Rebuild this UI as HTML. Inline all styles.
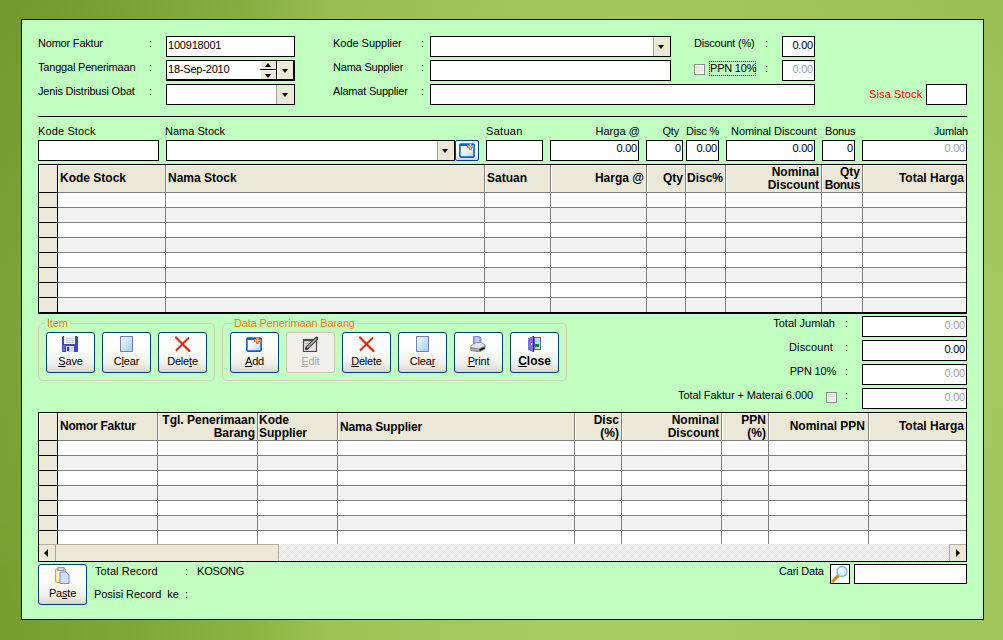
<!DOCTYPE html><html><head><meta charset="utf-8"><style>
*{margin:0;padding:0;box-sizing:border-box}
html,body{width:1003px;height:640px;overflow:hidden}
body{position:relative;font-family:"Liberation Sans", sans-serif;font-size:11px;color:#000;
background:linear-gradient(to bottom,rgba(0,0,0,0.03) 0px,rgba(255,255,255,0.05) 320px,rgba(0,0,0,0.0) 640px),linear-gradient(to right,rgb(117,158,46) 0px,rgb(120,161,50) 60px,rgb(128,169,58) 150px,rgb(138,180,66) 250px,rgb(156,195,84) 330px,rgb(166,202,95) 500px,rgb(168,204,98) 650px,rgb(164,200,92) 850px,rgb(160,197,88) 1003px)}
div{position:absolute}
.panel{left:21px;top:19px;width:963px;height:601px;border:1px solid #000;background:#c0ffc0}
.t{line-height:13px;white-space:pre;letter-spacing:-0.2px}
.tb{background:#fff;border:1px solid #000}
.sbb{background:#ebe8d8;border-top:1px solid #fff;border-left:1px solid #fff;border-right:1px solid #aca899;border-bottom:1px solid #aca899}
.btn{border:1px solid #003c74;border-radius:3px;background:linear-gradient(#ffffff 0%,#fdfdfb 35%,#f2f1ec 75%,#e4e2d8 92%,#d6d0c5 100%)}
.dis{border-color:#c9c7ba;background:#f0efea}
.grp{border:1px solid #d0d0bf;border-radius:5px}
.chk{width:11px;height:11px;border:1px solid #8a8a8a;box-shadow:inset 0 0 0 1px #fafafa;background:linear-gradient(135deg,#d8d8d4,#f6f6f4)}
.hb{line-height:13px;white-space:pre;font-weight:bold;font-size:12px}
</style></head><body>
<div class="panel"></div>
<div class="t" style="left:38px;top:37px;">Nomor Faktur</div>
<div class="t" style="left:149px;top:37px;">:</div>
<div class="t" style="left:38px;top:61px;">Tanggal Penerimaan</div>
<div class="t" style="left:149px;top:61px;">:</div>
<div class="t" style="left:38px;top:85px;">Jenis Distribusi Obat</div>
<div class="t" style="left:149px;top:85px;">:</div>
<div class="t" style="left:333px;top:37px;letter-spacing:-0.03px;">Kode Supplier</div>
<div class="t" style="left:421px;top:37px;">:</div>
<div class="t" style="left:333px;top:61px;">Nama Supplier</div>
<div class="t" style="left:421px;top:61px;">:</div>
<div class="t" style="left:333px;top:85px;">Alamat Supplier</div>
<div class="t" style="left:421px;top:85px;">:</div>
<div class="tb" style="left:166px;top:36px;width:129px;height:21px;"></div>
<div class="t" style="left:168px;top:39px;">100918001</div>
<div class="tb" style="left:166px;top:60px;width:129px;height:21px;"></div>
<div class="t" style="left:168px;top:63px;">18-Sep-2010</div>
<div class="tb" style="left:166px;top:84px;width:129px;height:21px;"></div>
<div class="tb" style="left:430px;top:36px;width:241px;height:21px;"></div>
<div class="tb" style="left:430px;top:60px;width:241px;height:21px;"></div>
<div class="tb" style="left:430px;top:84px;width:385px;height:21px;"></div>
<div class="t" style="left:694px;top:37px;">Discount (%)</div>
<div class="t" style="left:765px;top:37px;">:</div>
<div class="tb" style="left:782px;top:36px;width:33px;height:21px;"></div>
<div class="t" style="right:190px;top:39px;text-align:right;">0.00</div>
<div class="t" style="left:710px;top:62px;">PPN 10%</div>
<div class="t" style="left:765px;top:62px;">:</div>
<div class="tb" style="left:782px;top:60px;width:33px;height:21px;"></div>
<div class="t" style="right:190px;top:63px;text-align:right;color:#a0a0a0;">0.00</div>
<div class="t" style="left:869px;top:88px;color:#ff0000;letter-spacing:0.13px;">Sisa Stock</div>
<div class="tb" style="left:926px;top:84px;width:41px;height:21px;"></div>
<div class="ln" style="left:38px;top:116px;width:929px;height:1px;background:#000"></div>
<div class="t" style="left:38px;top:125px;letter-spacing:0.13px;">Kode Stock</div>
<div class="t" style="left:165px;top:125px;letter-spacing:0.02px;">Nama Stock</div>
<div class="t" style="left:486px;top:125px;letter-spacing:0.3px;">Satuan</div>
<div class="t" style="right:363px;top:125px;text-align:right;letter-spacing:0.05px;">Harga @</div>
<div class="t" style="right:324px;top:125px;text-align:right;">Qty</div>
<div class="t" style="left:686px;top:125px;">Disc %</div>
<div class="t" style="left:731px;top:125px;letter-spacing:-0.05px;">Nominal Discount</div>
<div class="t" style="left:825px;top:125px;">Bonus</div>
<div class="t" style="right:35px;top:125px;text-align:right;">Jumlah</div>
<div class="tb" style="left:38px;top:140px;width:121px;height:21px;"></div>
<div class="tb" style="left:166px;top:140px;width:289px;height:21px;"></div>
<div class="tb" style="left:486px;top:140px;width:57px;height:21px;"></div>
<div class="tb" style="left:550px;top:140px;width:89px;height:21px;"></div>
<div class="tb" style="left:646px;top:140px;width:37px;height:21px;"></div>
<div class="tb" style="left:686px;top:140px;width:33px;height:21px;"></div>
<div class="tb" style="left:726px;top:140px;width:89px;height:21px;"></div>
<div class="tb" style="left:822px;top:140px;width:33px;height:21px;"></div>
<div class="tb" style="left:862px;top:140px;width:105px;height:21px;"></div>
<div class="t" style="right:366px;top:142px;text-align:right;">0.00</div>
<div class="t" style="right:322px;top:142px;text-align:right;">0</div>
<div class="t" style="right:286px;top:142px;text-align:right;">0.00</div>
<div class="t" style="right:190px;top:142px;text-align:right;">0.00</div>
<div class="t" style="right:150px;top:142px;text-align:right;">0</div>
<div class="t" style="right:38px;top:142px;text-align:right;color:#a0a0a0;">0.00</div>
<div style="left:38px;top:164px;width:929px;height:150px;background:#000"></div>
<div style="left:39px;top:165px;width:927px;height:27px;background:#ebe8d8"></div>
<div style="left:58px;top:193px;width:908px;height:14px;background:#ffffff"></div>
<div style="left:39px;top:193px;width:18px;height:14px;background:#ebe8d8"></div>
<div style="left:58px;top:208px;width:908px;height:14px;background:#f2f2f2"></div>
<div style="left:39px;top:208px;width:18px;height:14px;background:#ebe8d8"></div>
<div style="left:58px;top:223px;width:908px;height:14px;background:#ffffff"></div>
<div style="left:39px;top:223px;width:18px;height:14px;background:#ebe8d8"></div>
<div style="left:58px;top:238px;width:908px;height:14px;background:#f2f2f2"></div>
<div style="left:39px;top:238px;width:18px;height:14px;background:#ebe8d8"></div>
<div style="left:58px;top:253px;width:908px;height:14px;background:#ffffff"></div>
<div style="left:39px;top:253px;width:18px;height:14px;background:#ebe8d8"></div>
<div style="left:58px;top:268px;width:908px;height:14px;background:#f2f2f2"></div>
<div style="left:39px;top:268px;width:18px;height:14px;background:#ebe8d8"></div>
<div style="left:58px;top:283px;width:908px;height:14px;background:#ffffff"></div>
<div style="left:39px;top:283px;width:18px;height:14px;background:#ebe8d8"></div>
<div style="left:58px;top:298px;width:908px;height:14px;background:#f2f2f2"></div>
<div style="left:39px;top:298px;width:18px;height:14px;background:#ebe8d8"></div>
<div style="left:58px;top:192px;width:908px;height:1px;background:#808080"></div>
<div style="left:58px;top:207px;width:908px;height:1px;background:#808080"></div>
<div style="left:58px;top:222px;width:908px;height:1px;background:#808080"></div>
<div style="left:58px;top:237px;width:908px;height:1px;background:#808080"></div>
<div style="left:58px;top:252px;width:908px;height:1px;background:#808080"></div>
<div style="left:58px;top:267px;width:908px;height:1px;background:#808080"></div>
<div style="left:58px;top:282px;width:908px;height:1px;background:#808080"></div>
<div style="left:58px;top:297px;width:908px;height:1px;background:#808080"></div>
<div style="left:39px;top:165px;width:927px;height:1px;background:#f6f4ea"></div>
<div style="left:39px;top:165px;width:1px;height:27px;background:#fff"></div>
<div style="left:58px;top:165px;width:1px;height:27px;background:#fff"></div>
<div style="left:57px;top:165px;width:1px;height:147px;background:#000"></div>
<div style="left:39px;top:192px;width:18px;height:1px;background:#000"></div>
<div style="left:39px;top:207px;width:18px;height:1px;background:#000"></div>
<div style="left:39px;top:222px;width:18px;height:1px;background:#000"></div>
<div style="left:39px;top:237px;width:18px;height:1px;background:#000"></div>
<div style="left:39px;top:252px;width:18px;height:1px;background:#000"></div>
<div style="left:39px;top:267px;width:18px;height:1px;background:#000"></div>
<div style="left:39px;top:282px;width:18px;height:1px;background:#000"></div>
<div style="left:39px;top:297px;width:18px;height:1px;background:#000"></div>
<div style="left:165px;top:165px;width:1px;height:147px;background:#808080"></div>
<div style="left:166px;top:165px;width:1px;height:27px;background:#fff"></div>
<div style="left:484px;top:165px;width:1px;height:147px;background:#808080"></div>
<div style="left:485px;top:165px;width:1px;height:27px;background:#fff"></div>
<div style="left:550px;top:165px;width:1px;height:147px;background:#808080"></div>
<div style="left:551px;top:165px;width:1px;height:27px;background:#fff"></div>
<div style="left:646px;top:165px;width:1px;height:147px;background:#808080"></div>
<div style="left:647px;top:165px;width:1px;height:27px;background:#fff"></div>
<div style="left:685px;top:165px;width:1px;height:147px;background:#808080"></div>
<div style="left:686px;top:165px;width:1px;height:27px;background:#fff"></div>
<div style="left:725px;top:165px;width:1px;height:147px;background:#808080"></div>
<div style="left:726px;top:165px;width:1px;height:27px;background:#fff"></div>
<div style="left:821px;top:165px;width:1px;height:147px;background:#808080"></div>
<div style="left:822px;top:165px;width:1px;height:27px;background:#fff"></div>
<div style="left:862px;top:165px;width:1px;height:147px;background:#808080"></div>
<div style="left:863px;top:165px;width:1px;height:27px;background:#fff"></div>
<div class="hb" style="left:60px;top:172px;">Kode Stock</div>
<div class="hb" style="left:168px;top:172px;">Nama Stock</div>
<div class="hb" style="left:487px;top:172px;">Satuan</div>
<div class="hb" style="right:359px;top:172px;text-align:right;">Harga @</div>
<div class="hb" style="right:320px;top:172px;text-align:right;">Qty</div>
<div class="hb" style="left:687px;top:172px;">Disc%</div>
<div class="hb" style="right:184px;top:166px;text-align:right;">Nominal</div>
<div class="hb" style="right:184px;top:179px;text-align:right;">Discount</div>
<div class="hb" style="right:143px;top:166px;text-align:right;">Qty</div>
<div class="hb" style="right:143px;top:179px;text-align:right;letter-spacing:-0.4px">Bonus</div>
<div class="hb" style="right:39px;top:172px;text-align:right;">Total Harga</div>
<div style="left:38px;top:412px;width:929px;height:150px;background:#000"></div>
<div style="left:39px;top:413px;width:927px;height:27px;background:#ebe8d8"></div>
<div style="left:58px;top:441px;width:908px;height:14px;background:#ffffff"></div>
<div style="left:39px;top:441px;width:18px;height:14px;background:#ebe8d8"></div>
<div style="left:58px;top:456px;width:908px;height:14px;background:#f2f2f2"></div>
<div style="left:39px;top:456px;width:18px;height:14px;background:#ebe8d8"></div>
<div style="left:58px;top:471px;width:908px;height:14px;background:#ffffff"></div>
<div style="left:39px;top:471px;width:18px;height:14px;background:#ebe8d8"></div>
<div style="left:58px;top:486px;width:908px;height:14px;background:#f2f2f2"></div>
<div style="left:39px;top:486px;width:18px;height:14px;background:#ebe8d8"></div>
<div style="left:58px;top:501px;width:908px;height:14px;background:#ffffff"></div>
<div style="left:39px;top:501px;width:18px;height:14px;background:#ebe8d8"></div>
<div style="left:58px;top:516px;width:908px;height:14px;background:#f2f2f2"></div>
<div style="left:39px;top:516px;width:18px;height:14px;background:#ebe8d8"></div>
<div style="left:58px;top:531px;width:908px;height:13px;background:#ffffff"></div>
<div style="left:39px;top:531px;width:18px;height:13px;background:#ebe8d8"></div>
<div style="left:58px;top:440px;width:908px;height:1px;background:#808080"></div>
<div style="left:58px;top:455px;width:908px;height:1px;background:#808080"></div>
<div style="left:58px;top:470px;width:908px;height:1px;background:#808080"></div>
<div style="left:58px;top:485px;width:908px;height:1px;background:#808080"></div>
<div style="left:58px;top:500px;width:908px;height:1px;background:#808080"></div>
<div style="left:58px;top:515px;width:908px;height:1px;background:#808080"></div>
<div style="left:58px;top:530px;width:908px;height:1px;background:#808080"></div>
<div style="left:39px;top:413px;width:927px;height:1px;background:#f6f4ea"></div>
<div style="left:39px;top:413px;width:1px;height:27px;background:#fff"></div>
<div style="left:58px;top:413px;width:1px;height:27px;background:#fff"></div>
<div style="left:57px;top:413px;width:1px;height:131px;background:#000"></div>
<div style="left:39px;top:440px;width:18px;height:1px;background:#000"></div>
<div style="left:39px;top:455px;width:18px;height:1px;background:#000"></div>
<div style="left:39px;top:470px;width:18px;height:1px;background:#000"></div>
<div style="left:39px;top:485px;width:18px;height:1px;background:#000"></div>
<div style="left:39px;top:500px;width:18px;height:1px;background:#000"></div>
<div style="left:39px;top:515px;width:18px;height:1px;background:#000"></div>
<div style="left:39px;top:530px;width:18px;height:1px;background:#000"></div>
<div style="left:157px;top:413px;width:1px;height:131px;background:#808080"></div>
<div style="left:158px;top:413px;width:1px;height:27px;background:#fff"></div>
<div style="left:257px;top:413px;width:1px;height:131px;background:#808080"></div>
<div style="left:258px;top:413px;width:1px;height:27px;background:#fff"></div>
<div style="left:337px;top:413px;width:1px;height:131px;background:#808080"></div>
<div style="left:338px;top:413px;width:1px;height:27px;background:#fff"></div>
<div style="left:574px;top:413px;width:1px;height:131px;background:#808080"></div>
<div style="left:575px;top:413px;width:1px;height:27px;background:#fff"></div>
<div style="left:621px;top:413px;width:1px;height:131px;background:#808080"></div>
<div style="left:622px;top:413px;width:1px;height:27px;background:#fff"></div>
<div style="left:721px;top:413px;width:1px;height:131px;background:#808080"></div>
<div style="left:722px;top:413px;width:1px;height:27px;background:#fff"></div>
<div style="left:768px;top:413px;width:1px;height:131px;background:#808080"></div>
<div style="left:769px;top:413px;width:1px;height:27px;background:#fff"></div>
<div style="left:868px;top:413px;width:1px;height:131px;background:#808080"></div>
<div style="left:869px;top:413px;width:1px;height:27px;background:#fff"></div>
<div class="hb" style="left:60px;top:420px;letter-spacing:-0.25px">Nomor Faktur</div>
<div class="hb" style="right:748px;top:414px;text-align:right;">Tgl. Penerimaan</div>
<div class="hb" style="right:748px;top:427px;text-align:right;">Barang</div>
<div class="hb" style="left:259px;top:414px;">Kode</div>
<div class="hb" style="left:259px;top:427px;">Supplier</div>
<div class="hb" style="left:340px;top:421px;letter-spacing:-0.15px">Nama Supplier</div>
<div class="hb" style="right:384px;top:414px;text-align:right;">Disc</div>
<div class="hb" style="right:384px;top:427px;text-align:right;">(%)</div>
<div class="hb" style="right:284px;top:414px;text-align:right;">Nominal</div>
<div class="hb" style="right:284px;top:427px;text-align:right;">Discount</div>
<div class="hb" style="right:237px;top:414px;text-align:right;">PPN</div>
<div class="hb" style="right:237px;top:427px;text-align:right;">(%)</div>
<div class="hb" style="right:138px;top:420px;text-align:right;">Nominal PPN</div>
<div class="hb" style="right:39px;top:420px;text-align:right;">Total Harga</div>
<div style="left:39px;top:544px;width:927px;height:17px;background-color:#f6f5ee;background-image:repeating-conic-gradient(#ffffff 0 25%,#ebe8d8 0 50%);background-size:2px 2px"></div>
<div style="left:39px;top:544px;width:240px;height:17px;background:#ebe8d8"></div>
<div style="left:949px;top:544px;width:17px;height:17px;background:#ebe8d8"></div>
<div style="left:39px;top:544px;width:240px;height:1px;background:#b4b0a0"></div>
<div style="left:949px;top:544px;width:17px;height:1px;background:#b4b0a0"></div>
<div style="left:55px;top:545px;width:1px;height:16px;background:#aca899"></div>
<div style="left:278px;top:545px;width:1px;height:16px;background:#aca899"></div>
<div style="left:949px;top:545px;width:1px;height:16px;background:#aca899"></div>
<div class="grp" style="left:38px;top:323px;width:177px;height:58px"></div>
<div class="t" style="left:45px;top:317px;padding:0 2px;background:#c0ffc0;color:#ff7a00">Item</div>
<div class="grp" style="left:222px;top:323px;width:345px;height:58px"></div>
<div class="t" style="left:232px;top:317px;padding:0 2px;letter-spacing:-0.15px;background:#c0ffc0;color:#ff7a00">Data Penerimaan Barang</div>
<div class="btn" style="left:46px;top:332px;width:49px;height:41px"></div>
<div style="left:62px;top:336px;width:16px;height:16px;line-height:0"><svg width="16" height="16" viewBox="0 0 16 16" shape-rendering="crispEdges">
<path d="M1 0h14v1h1v15h-16v-15h1z" fill="#4646c0"/>
<rect x="2" y="0" width="11" height="8" fill="#f0f0f4"/>
<rect x="4" y="2" width="8" height="1" fill="#c8c8d0"/><rect x="4" y="4" width="8" height="1" fill="#c8c8d0"/><rect x="4" y="6" width="8" height="1" fill="#c8c8d0"/>
<rect x="4" y="10" width="8" height="6" fill="#d8d8e8"/>
<rect x="5" y="11" width="2" height="4" fill="#3030a0"/>
<rect x="1" y="9" width="2" height="6" fill="#6a6ae0"/>
</svg></div>
<div class="t" style="left:46px;width:49px;top:355px;text-align:center;"><u>S</u>ave</div>
<div class="btn" style="left:102px;top:332px;width:49px;height:41px"></div>
<div style="left:120px;top:336px;width:13px;height:16px;line-height:0"><svg width="13" height="16" viewBox="0 0 13 16" shape-rendering="crispEdges">
<defs><linearGradient id="gc" x1="0" y1="0" x2="1" y2="1"><stop offset="0" stop-color="#f4f8ff"/><stop offset="1" stop-color="#9cd0f4"/></linearGradient></defs>
<rect x="0" y="0" width="13" height="16" fill="#7c7cc0"/>
<rect x="1" y="1" width="11" height="14" fill="url(#gc)"/>
</svg></div>
<div class="t" style="left:102px;width:49px;top:355px;text-align:center;">C<u>l</u>ear</div>
<div class="btn" style="left:158px;top:332px;width:49px;height:41px"></div>
<div style="left:174px;top:336px;width:17px;height:16px;line-height:0"><svg width="17" height="16" viewBox="0 0 17 16">
<path d="M2 1.5L15.5 15" stroke="#e82000" stroke-width="2.2" stroke-linecap="round"/>
<path d="M14.5 2L2.5 14" stroke="#e82000" stroke-width="1.8" stroke-linecap="round"/>
</svg></div>
<div class="t" style="left:158px;width:49px;top:355px;text-align:center;">Dele<u>t</u>e</div>
<div class="btn" style="left:230px;top:332px;width:49px;height:41px"></div>
<div style="left:246px;top:337px;width:16px;height:15px;line-height:0"><svg width="16" height="15" viewBox="0 0 16 15">
<defs><linearGradient id="ga" x1="0" y1="0" x2="1" y2="1"><stop offset="0" stop-color="#ffffff"/><stop offset="0.5" stop-color="#eef6fe"/><stop offset="1" stop-color="#a8d4f8"/></linearGradient></defs>
<rect x="0.9" y="1.2" width="14.2" height="12.9" rx="1" fill="url(#ga)" stroke="#0c5cd6" stroke-width="1.6"/>
<rect x="0.5" y="0.6" width="15" height="2.4" rx="1" fill="#0c5cd6"/>
<rect x="8" y="2" width="7" height="3" fill="#ff7418"/>
<rect x="10" y="0" width="3" height="7" fill="#ff7418"/>
<rect x="9" y="3.1" width="5" height="0.8" fill="#ffc890"/>
<rect x="11.1" y="1" width="0.8" height="5" fill="#ffc890"/>
</svg></div>
<div class="t" style="left:230px;width:49px;top:355px;text-align:center;"><u>A</u>dd</div>
<div class="btn dis" style="left:286px;top:332px;width:49px;height:41px"></div>
<div style="left:302px;top:336px;width:16px;height:16px;line-height:0"><svg width="16" height="16" viewBox="0 0 16 16">
<rect x="1.5" y="3.5" width="13" height="12" fill="#e4e4e4" stroke="#4a4a4a" stroke-width="1.2"/>
<rect x="1" y="3" width="14" height="2.2" fill="#4a4a4a"/>
<path d="M3 7.5h6M3 10h5" stroke="#b0b0b0" stroke-width="1"/>
<path d="M5 12L14.5 2.5" stroke="#3c3c3c" stroke-width="3.6" stroke-linecap="round"/>
<path d="M5.2 11.8L14.2 2.8" stroke="#b4b4b4" stroke-width="1.6"/>
<path d="M3.6 13.6L5 12" stroke="#202020" stroke-width="1.6"/>
</svg></div>
<div class="t" style="left:286px;width:49px;top:355px;text-align:center;color:#aca899;"><u>E</u>dit</div>
<div class="btn" style="left:342px;top:332px;width:49px;height:41px"></div>
<div style="left:358px;top:336px;width:17px;height:16px;line-height:0"><svg width="17" height="16" viewBox="0 0 17 16">
<path d="M2 1.5L15.5 15" stroke="#e82000" stroke-width="2.2" stroke-linecap="round"/>
<path d="M14.5 2L2.5 14" stroke="#e82000" stroke-width="1.8" stroke-linecap="round"/>
</svg></div>
<div class="t" style="left:342px;width:49px;top:355px;text-align:center;"><u>D</u>elete</div>
<div class="btn" style="left:398px;top:332px;width:49px;height:41px"></div>
<div style="left:416px;top:336px;width:13px;height:16px;line-height:0"><svg width="13" height="16" viewBox="0 0 13 16" shape-rendering="crispEdges">
<defs><linearGradient id="gc" x1="0" y1="0" x2="1" y2="1"><stop offset="0" stop-color="#f4f8ff"/><stop offset="1" stop-color="#9cd0f4"/></linearGradient></defs>
<rect x="0" y="0" width="13" height="16" fill="#7c7cc0"/>
<rect x="1" y="1" width="11" height="14" fill="url(#gc)"/>
</svg></div>
<div class="t" style="left:398px;width:49px;top:355px;text-align:center;">Clea<u>r</u></div>
<div class="btn" style="left:454px;top:332px;width:49px;height:41px"></div>
<div style="left:470px;top:336px;width:16px;height:16px;line-height:0"><svg width="16" height="16" viewBox="0 0 16 16">
<path d="M3.5 0.5h6l1.5 1.5v6h-7.5z" fill="#94a4f0" stroke="#6a78d0" stroke-width="0.8"/>
<path d="M5 1.5h4v5h-4z" fill="#c0ccff"/>
<path d="M1 9.5l5-3h5l4 2.5v1.5l-6 3.5h-8z" fill="#e4e4e4" stroke="#8a8a8a" stroke-width="0.9"/>
<path d="M1 11.5l8 1.5l6-3v3l-6 3l-8-1.5z" fill="#a8a8a8" stroke="#787878" stroke-width="0.8"/>
<path d="M9.5 14.2l5-2.5" stroke="#101010" stroke-width="1.6"/>
</svg></div>
<div class="t" style="left:454px;width:49px;top:355px;text-align:center;"><u>P</u>rint</div>
<div class="btn" style="left:510px;top:332px;width:49px;height:41px"></div>
<div style="left:528px;top:336px;width:13px;height:16px;line-height:0"><svg width="13" height="16" viewBox="0 0 13 16" shape-rendering="crispEdges">
<rect x="6" y="1" width="7" height="13" fill="#6060b0"/>
<rect x="7" y="2" width="5" height="11" fill="#b8d8ff"/>
<rect x="7" y="8" width="4" height="3" fill="#008800"/>
<path d="M0 2h2v-1h2v-1h2v16h-2v-1h-2v-1h-2z" fill="#7c6ee0"/>
<rect x="5" y="0" width="1" height="16" fill="#303060"/>
<rect x="3" y="7" width="1" height="2" fill="#e8e8ff"/>
</svg></div>
<div class="t" style="left:510px;width:49px;top:355px;text-align:center;font-weight:bold;font-size:12px;letter-spacing:0;"><u>C</u>lose</div>
<div class="t" style="right:168px;top:317px;text-align:right;letter-spacing:0.0px;">Total Jumlah</div>
<div class="t" style="right:170px;top:341px;text-align:right;letter-spacing:0.16px;">Discount</div>
<div class="t" style="right:167px;top:365px;text-align:right;">PPN 10%</div>
<div class="t" style="right:190px;top:389px;text-align:right;letter-spacing:-0.08px;">Total Faktur + Materai 6.000</div>
<div class="t" style="left:845px;top:317px;">:</div>
<div class="t" style="left:845px;top:341px;">:</div>
<div class="t" style="left:845px;top:365px;">:</div>
<div class="t" style="left:845px;top:389px;">:</div>
<div class="chk" style="left:826px;top:392px"></div>
<div class="chk" style="left:694px;top:64px"></div>
<div class="tb" style="left:862px;top:316px;width:105px;height:21px;"></div>
<div class="tb" style="left:862px;top:340px;width:105px;height:21px;"></div>
<div class="tb" style="left:862px;top:364px;width:105px;height:21px;"></div>
<div class="tb" style="left:862px;top:388px;width:105px;height:21px;"></div>
<div class="t" style="right:38px;top:319px;text-align:right;color:#a0a0a0;">0.00</div>
<div class="t" style="right:38px;top:343px;text-align:right;">0.00</div>
<div class="t" style="right:38px;top:367px;text-align:right;color:#a0a0a0;">0.00</div>
<div class="t" style="right:38px;top:391px;text-align:right;color:#a0a0a0;">0.00</div>
<div class="btn" style="left:38px;top:564px;width:49px;height:41px"></div>
<div style="left:55px;top:567px;width:15px;height:17px;line-height:0"><svg width="15" height="17" viewBox="0 0 15 17">
<rect x="0.5" y="1.5" width="10" height="14" rx="2" fill="#fff2c0" stroke="#e8a020" stroke-width="1.2"/>
<rect x="3" y="0.5" width="6" height="3" fill="#d8d8e8" stroke="#8080a0" stroke-width="0.8"/>
<path d="M5 5h6l3 3v8.5h-9z" fill="#cce0fc" stroke="#7c88c8" stroke-width="1"/>
</svg></div>
<div class="t" style="left:38px;width:49px;top:587px;text-align:center;">Pa<u>s</u>te</div>
<div class="t" style="left:95px;top:565px;letter-spacing:0.07px;">Total Record</div>
<div class="t" style="left:185px;top:565px;">:</div>
<div class="t" style="left:197px;top:565px;">KOSONG</div>
<div class="t" style="left:94px;top:588px;letter-spacing:-0.05px;">Posisi Record  ke</div>
<div class="t" style="left:185px;top:588px;">:</div>
<div class="t" style="left:779px;top:565px;">Cari Data</div>
<div class="tb" style="left:830px;top:564px;width:20px;height:20px;"></div>
<div style="left:831px;top:565px;width:18px;height:18px;line-height:0"><svg width="18" height="18" viewBox="0 0 18 18">
<path d="M2 16L7 11" stroke="#d88010" stroke-width="3" stroke-linecap="round"/>
<circle cx="11" cy="6.5" r="5" fill="#d8f0ff" stroke="#88b8e0" stroke-width="1.3"/>
<circle cx="10" cy="5.5" r="2.5" fill="#f4fbff"/>
</svg></div>
<div class="tb" style="left:854px;top:564px;width:113px;height:20px;"></div>
<div style="left:653px;top:37px;width:1px;height:19px;background:#a0a0a0"></div>
<div style="left:654px;top:37px;width:16px;height:19px;background:#ebe8d8"></div>
<div style="left:658px;top:45px;width:0;height:0;border-left:3.5px solid transparent;border-right:3.5px solid transparent;border-top:4px solid #000"></div>
<div style="left:276px;top:85px;width:1px;height:19px;background:#a0a0a0"></div>
<div style="left:277px;top:85px;width:17px;height:19px;background:#ebe8d8"></div>
<div style="left:282px;top:93px;width:0;height:0;border-left:3.5px solid transparent;border-right:3.5px solid transparent;border-top:4px solid #000"></div>
<div style="left:437px;top:141px;width:1px;height:19px;background:#a0a0a0"></div>
<div style="left:438px;top:141px;width:16px;height:19px;background:#ebe8d8"></div>
<div style="left:442px;top:149px;width:0;height:0;border-left:3.5px solid transparent;border-right:3.5px solid transparent;border-top:4px solid #000"></div>
<div style="left:166px;top:79px;width:129px;height:2px;background:#000"></div>
<div style="left:293px;top:60px;width:2px;height:21px;background:#000"></div>
<div style="left:260px;top:61px;width:33px;height:18px;background:#000"></div>
<div style="left:260px;top:61px;width:16px;height:8px;background:#ebe8d8;border-top:1px solid #fff;border-left:1px solid #fff"></div>
<div style="left:260px;top:70px;width:16px;height:9px;background:#ebe8d8;border-top:1px solid #fff;border-left:1px solid #fff"></div>
<div style="left:277px;top:61px;width:16px;height:18px;background:#ebe8d8;border-top:1px solid #fff;border-left:1px solid #fff"></div>
<div style="left:265px;top:63px;width:0;height:0;border-left:3.5px solid transparent;border-right:3.5px solid transparent;border-bottom:4px solid #000"></div>
<div style="left:265px;top:74px;width:0;height:0;border-left:3.5px solid transparent;border-right:3.5px solid transparent;border-top:4px solid #000"></div>
<div style="left:282px;top:69px;width:0;height:0;border-left:3.5px solid transparent;border-right:3.5px solid transparent;border-top:4px solid #000"></div>
<div class="btn" style="left:455px;top:140px;width:24px;height:21px;border-radius:2px"></div>
<div style="left:459px;top:143px;width:16px;height:15px;line-height:0"><svg width="16" height="15" viewBox="0 0 16 15">
<defs><linearGradient id="ga2" x1="0" y1="0" x2="1" y2="1"><stop offset="0" stop-color="#ffffff"/><stop offset="0.5" stop-color="#eef6fe"/><stop offset="1" stop-color="#a8d4f8"/></linearGradient></defs>
<rect x="0.9" y="1.2" width="14.2" height="12.9" rx="1" fill="url(#ga2)" stroke="#0c5cd6" stroke-width="1.6"/>
<rect x="0.5" y="0.6" width="15" height="2.4" rx="1" fill="#0c5cd6"/>
<rect x="8" y="2" width="7" height="3" fill="#ff7418"/>
<rect x="10" y="0" width="3" height="7" fill="#ff7418"/>
<rect x="9" y="3.1" width="5" height="0.8" fill="#ffc890"/>
<rect x="11.1" y="1" width="0.8" height="5" fill="#ffc890"/>
</svg></div>
<div style="left:709px;top:61px;width:47px;height:15px;border:1px dotted #303030"></div>
<div style="left:44px;top:549px;width:0;height:0;border-top:4px solid transparent;border-bottom:4px solid transparent;border-right:4px solid #000"></div>
<div style="left:956px;top:549px;width:0;height:0;border-top:4px solid transparent;border-bottom:4px solid transparent;border-left:4px solid #000"></div>
</body></html>
